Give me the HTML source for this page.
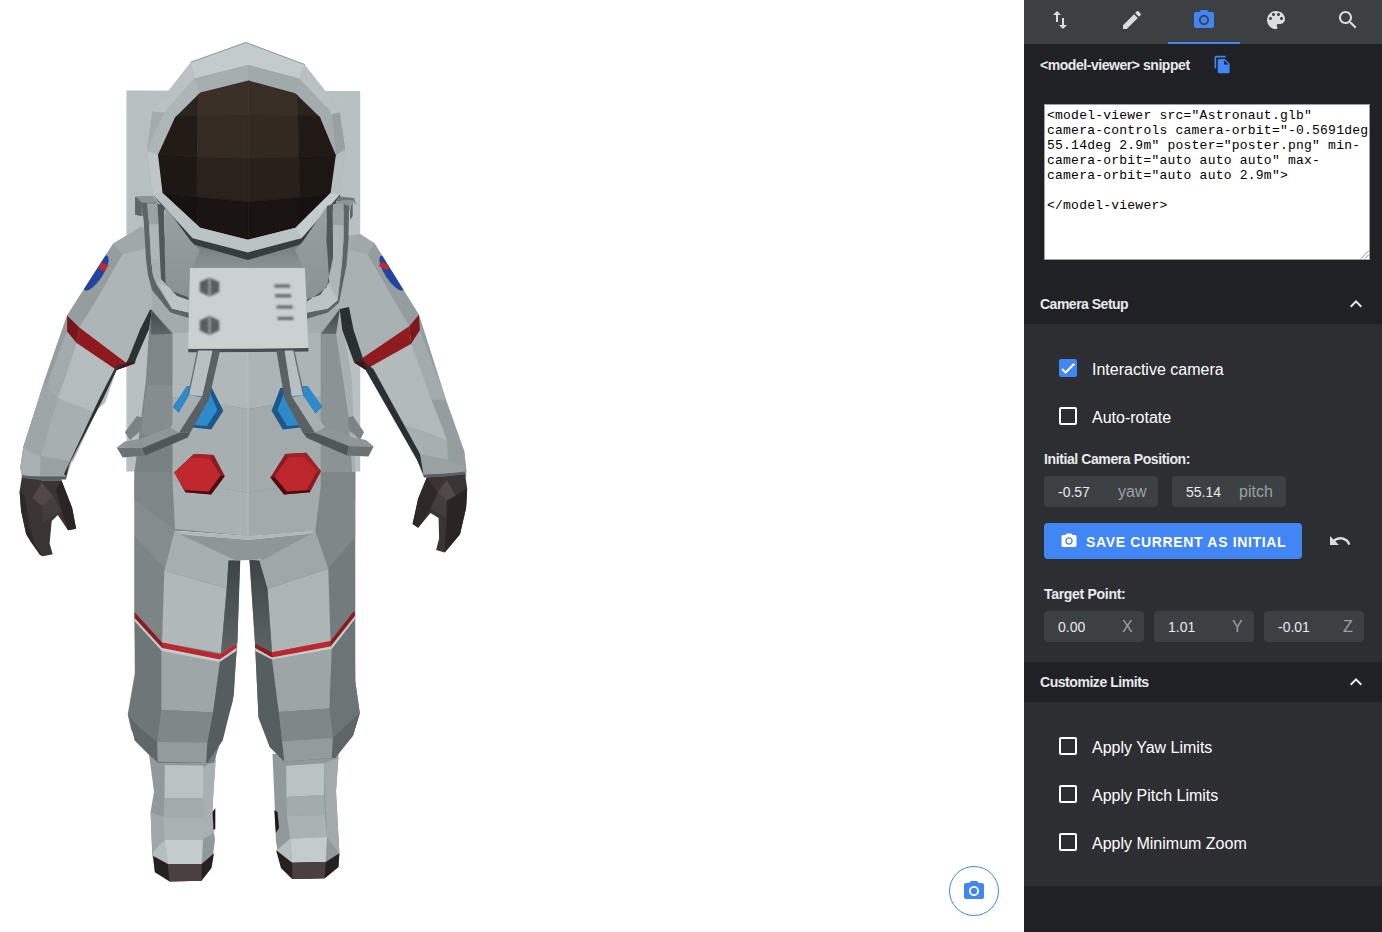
<!DOCTYPE html>
<html><head><meta charset="utf-8">
<style>
*{margin:0;padding:0;box-sizing:border-box}
html,body{width:1382px;height:932px;overflow:hidden;background:#fff;font-family:"Liberation Sans",sans-serif}
#viewer{position:absolute;left:0;top:0;width:1024px;height:932px;background:#fff}
#astro{position:absolute;left:0;top:0}
#snap{position:absolute;left:949px;top:866px;width:50px;height:50px;border:1.5px solid #4285f4;border-radius:50%}
#snap svg{position:absolute;left:12px;top:12px}
#panel{position:absolute;left:1024px;top:0;width:358px;height:932px;background:#202124;color:#e8eaed}
#tabs{position:absolute;left:0;top:0;width:358px;height:44px;background:#3c4043}
#tabs svg{position:absolute;top:8px}
#uline{position:absolute;left:144px;top:42px;width:72px;height:2px;background:#4285f4}
.abs{position:absolute}
.hdr{font-size:14px;font-weight:bold;color:#e8eaed;white-space:nowrap}
#ta{position:absolute;left:20px;top:104px;width:326px;height:156px;background:#fff;border:1px solid #a0a0a0;font-family:"Liberation Mono",monospace;font-size:13px;line-height:15px;letter-spacing:0.23px;color:#000;padding:3px 2px;white-space:pre;overflow:hidden}
.sec{position:absolute;left:0;width:358px;background:#2d2e31}
.cb{position:absolute;left:35px;width:18px;height:18px;border:2px solid #fff;border-radius:2px}
.cb.on{background:#4285f4;border-color:#4285f4}
.lbl{position:absolute;left:68px;font-size:16px;color:#fff;white-space:nowrap}
.inp{position:absolute;height:31px;background:#3c4043;border-radius:4px}
.inp span{position:absolute;font-size:14px;white-space:nowrap}
.v{color:#e8eaed}
.u{color:#9aa0a6;font-size:16px!important}
#btn{position:absolute;left:20px;top:523px;width:258px;height:36px;background:#4285f4;border-radius:4px}
</style></head><body>
<div id="viewer">
<svg id="astro" width="1024" height="932" viewBox="0 0 1024 932"><defs><linearGradient id="bp" x1="0" y1="0" x2="1" y2="0"><stop offset="0" stop-color="#b7bfc1"/><stop offset="0.5" stop-color="#bbc3c5"/><stop offset="1" stop-color="#b8c0c2"/></linearGradient><linearGradient id="thl" x1="0" y1="0" x2="0" y2="1"><stop offset="0" stop-color="#3d4447"/><stop offset="1" stop-color="#5c6466"/></linearGradient><linearGradient id="arpt" x1="0" y1="0" x2="0" y2="1"><stop offset="0" stop-color="#41484b"/><stop offset="1" stop-color="#5e6669"/></linearGradient><linearGradient id="lpl" x1="0" y1="0" x2="0" y2="1"><stop offset="0" stop-color="#98a0a2"/><stop offset="1" stop-color="#8a9294"/></linearGradient><linearGradient id="chs" x1="0" y1="0" x2="0" y2="1"><stop offset="0" stop-color="#70787a"/><stop offset="1" stop-color="#8a9294"/></linearGradient><clipPath id="visor"><polygon points="248.5,80.6 295.3,93.3 320,117.3 335.8,155.3 330.6,193.1 295.6,227.7 247.8,239.7 200.1,227.7 162.6,193.1 158,154.8 175,117.6 200.3,92.4"/></clipPath><filter id="bl" x="-30%" y="-30%" width="160%" height="160%"><feGaussianBlur stdDeviation="0.9"/></filter></defs><polygon fill="url(#bp)" points="126.0,90.5 360.2,91.0 360.2,471.5 126.0,471.5"/><polygon fill="#cfd7d9" points="126.0,90.5 127.2,90.5 127.2,471.5 126.0,471.5"/><polygon fill="#91999b" points="148.9,753.7 215.8,753.7 213.2,796.6 212.4,812.0 214.0,832.7 215.0,839.6 211.5,867.0 154.9,872.2 152.3,855.0 150.6,812.0 154.0,791.5"/><polygon fill="#9fa7a9" points="150.6,812.0 164.3,817.6 164.3,839.6 152.3,855.0"/><polygon fill="#a8b0b2" points="203.0,767.5 215.8,760.0 213.2,796.6 212.4,812.0 214.0,832.7 203.0,839.6"/><polygon fill="#bac2c4" points="164.8,765.0 203.1,765.5 203.1,798.0 164.5,798.0"/><polygon fill="#a3abad" points="164.5,798.0 203.1,798.0 204.6,817.6 163.5,817.6"/><polygon fill="#aab2b4" points="163.5,817.6 204.6,817.6 203.0,840.0 164.3,840.0"/><polygon fill="#c3cbcd" points="164.3,840.0 203.0,840.0 201.6,864.0 167.8,864.0"/><polygon fill="#b6bec0" points="153.2,852.0 164.3,840.0 167.8,864.0 153.2,856.0"/><polygon fill="#1c1819" points="212.5,812.0 215.3,808.0 215.3,829.0 213.5,830.0"/><polygon fill="#272021" points="153.2,855.9 167.8,864.0 201.6,864.0 214.0,853.3 211.5,867.9 201.6,880.7 169.5,881.6 154.9,872.2"/><polygon fill="#4a4041" points="167.8,864.0 201.6,864.0 201.6,880.7 169.5,881.6"/><polygon fill="#91999b" points="272.5,753.7 338.5,753.7 336.0,791.5 339.4,853.3 338.5,867.0 324.8,878.2 292.2,879.0 281.0,867.9 275.9,841.3 275.0,812.0"/><polygon fill="#a2aaac" points="324.0,763.2 338.5,758.0 336.0,791.5 339.4,853.3 327.0,837.0"/><polygon fill="#1c1819" points="274.3,810.0 277.5,812.0 279.0,828.0 275.8,833.0"/><polygon fill="#bac2c4" points="286.2,765.7 324.0,763.2 324.0,795.0 286.5,797.0"/><polygon fill="#a3abad" points="286.5,797.0 324.0,795.0 325.0,815.0 287.0,816.0"/><polygon fill="#aab2b4" points="287.0,816.0 325.0,815.0 327.0,837.0 290.0,838.7"/><polygon fill="#c3cbcd" points="290.0,838.7 327.0,837.0 325.7,861.9 292.2,862.7"/><polygon fill="#b6bec0" points="277.0,850.0 290.0,838.7 292.2,862.7 278.0,855.0"/><polygon fill="#272021" points="276.0,850.0 292.2,862.7 325.7,861.9 339.4,853.3 338.5,867.0 324.8,878.2 292.2,879.0 281.0,867.9"/><polygon fill="#4a4041" points="292.2,862.7 325.7,861.9 324.8,878.2 292.2,879.0"/><polygon fill="#747c7e" points="134.5,480.0 176.1,530.7 235.8,560.5 239.8,560.0 237.4,642.6 232.7,701.6 213.8,763.0 157.2,763.0 149.0,753.5 131.2,730.0 127.7,714.6 134.8,673.3 134.5,612.0"/><polygon fill="#7a8284" points="134.5,472.0 172.5,472.0 175.0,493.0 134.5,492.9"/><polygon fill="#848c8e" points="134.5,492.9 175.0,493.0 175.0,529.0 164.8,568.8 134.5,536.6"/><polygon fill="#7c8486" points="134.5,536.6 164.8,568.8 162.0,642.6 134.5,612.0"/><polygon fill="#a7afb1" points="175.0,529.0 235.8,560.5 228.5,560.5 226.7,588.5 164.3,570.4 164.8,568.8"/><polygon fill="#b0b8ba" points="164.3,570.4 226.7,588.5 221.0,653.2 162.0,642.6"/><polygon fill="url(#thl)" points="228.5,560.5 240.3,560.5 237.4,642.6 221.0,653.2 226.7,588.5"/><polygon fill="#6e7678" points="134.5,618.0 161.3,651.2 161.3,709.8 157.1,741.9 157.8,761.4 150.1,755.8 134.8,740.5 128.5,715.3 135.5,680.5"/><polygon fill="#5f6769" points="128.5,715.3 134.8,740.5 150.1,755.8 157.8,761.4 157.1,741.9 140.0,728.0"/><polygon fill="#555d5f" points="219.9,660.9 236.6,648.4 233.8,695.8 222.7,740.5 207.3,762.8 206.0,762.8 207.3,742.6 212.9,712.6"/><polygon fill="#9ea6a8" points="161.3,651.2 219.9,660.9 212.9,712.6 161.3,709.8"/><polygon fill="#7f8789" points="161.3,709.8 212.9,712.6 207.3,742.6 157.1,741.9"/><polygon fill="#939b9d" points="157.1,741.9 207.3,742.6 206.0,762.8 157.8,761.4"/><polygon fill="#8f1b20" points="134.5,612.0 162.0,642.6 162.0,648.0 134.5,618.0"/><polygon fill="#c0252b" points="162.0,642.6 219.7,654.4 236.0,643.8 236.3,648.0 219.7,659.5 162.0,648.0"/><polygon fill="#c4ccce" points="134.5,618.0 162.0,648.0 219.7,659.5 236.3,648.0 236.3,651.0 219.7,662.0 162.0,651.2 134.5,621.0"/><polygon fill="#737b7d" points="259.3,560.5 315.4,530.7 355.2,472.0 355.3,610.7 355.3,681.6 359.8,713.0 353.0,735.6 335.0,758.1 284.4,761.5 269.8,746.9 258.5,717.6 255.1,645.5 249.5,560.0"/><polygon fill="#788082" points="355.2,472.0 320.8,472.0 316.0,493.0 355.2,492.9"/><polygon fill="#7f8789" points="355.2,492.9 316.0,493.0 315.4,529.0 328.0,568.8 355.2,536.6"/><polygon fill="#9fa7a9" points="262.9,559.6 315.4,530.7 328.3,568.8 267.5,589.0 259.3,560.5"/><polygon fill="#adb5b7" points="267.5,589.0 328.3,568.8 330.5,641.0 272.0,652.3"/><polygon fill="url(#thl)" points="249.5,560.0 259.3,560.5 267.5,589.0 272.0,652.3 255.1,644.4"/><polygon fill="#565e60" points="255.1,645.5 272.0,659.0 278.8,712.0 282.1,741.2 284.4,761.5 269.8,746.9 258.5,717.6"/><polygon fill="#6c7476" points="331.7,649.0 354.2,616.0 355.3,681.6 359.8,713.0 353.0,735.6 335.0,758.1 331.7,758.1 332.8,737.8 329.4,708.6"/><polygon fill="#5d6567" points="359.8,713.0 353.0,735.6 335.0,758.1 331.7,758.1 332.8,737.8"/><polygon fill="#9da5a7" points="272.0,659.0 331.7,649.0 329.4,708.6 278.8,712.0"/><polygon fill="#7f8789" points="278.8,712.0 329.4,708.6 332.8,737.8 282.1,741.2"/><polygon fill="#939b9d" points="282.1,741.2 332.8,737.8 331.7,758.1 284.4,761.5"/><polygon fill="#8f1b20" points="255.1,643.8 272.0,652.3 272.0,657.5 255.1,648.0"/><polygon fill="#c0252b" points="272.0,652.3 330.5,641.0 330.7,646.5 272.0,657.5"/><polygon fill="#8e1a1f" points="330.5,641.0 354.2,610.7 355.0,616.0 330.7,646.5"/><polygon fill="#c4ccce" points="255.1,648.0 272.0,657.5 330.7,646.5 355.0,616.0 355.0,619.0 331.7,649.0 272.0,659.5 255.1,651.0"/><polygon fill="#7e8688" points="150.9,300.0 339.7,300.0 343.6,380.0 355.2,472.0 355.2,499.7 315.4,530.7 248.4,536.1 176.1,530.7 134.5,499.7 134.5,472.0 145.9,380.0"/><polygon fill="#7e8688" points="150.9,334.7 172.1,333.8 172.5,385.0 147.0,385.0"/><polygon fill="#858d8f" points="147.0,385.0 172.5,385.0 172.5,435.0 140.5,435.0"/><polygon fill="#798183" points="140.5,435.0 172.5,435.0 172.5,472.0 134.5,472.0 137.4,455.0"/><polygon fill="#8b9395" points="321.6,333.8 336.0,333.8 348.6,415.8 352.0,472.0 320.8,472.0"/><polygon fill="#a8b0b2" points="336.0,333.8 339.7,309.0 352.0,380.0 355.2,472.0 352.0,472.0 348.6,415.8"/><polygon fill="#b0b8ba" points="172.5,330.0 248.4,330.0 248.4,409.0 172.5,397.0"/><polygon fill="#acb4b6" points="248.4,330.0 320.8,330.0 320.8,397.0 248.4,409.0"/><polygon fill="#a7afb1" points="172.5,397.0 248.4,409.0 248.4,492.8 172.5,480.6"/><polygon fill="#a2aaac" points="248.4,409.0 320.8,397.0 320.8,480.6 248.4,492.8"/><polygon fill="#a9b1b3" points="172.5,480.6 248.4,492.8 248.4,536.1 175.0,529.0"/><polygon fill="#a2aaac" points="248.4,492.8 320.8,480.6 320.8,486.0 315.4,530.7 248.4,536.1"/><polygon fill="#bbc3c5" points="247.6,330.0 248.6,330.0 248.6,536.0 247.6,536.0"/><polygon fill="#b0b8ba" points="176.1,530.7 248.4,536.1 315.4,530.7 311.8,533.4 248.4,539.7 179.7,534.3"/><polygon fill="#8e9698" points="179.7,534.3 248.4,539.7 311.8,533.4 262.9,559.6 235.8,560.5"/><polygon fill="#a3abad" points="141.6,226.7 190.8,241.0 247.8,259.2 302.4,242.2 360.6,234.0 374.5,243.5 339.8,309.8 320.8,332.8 172.5,332.8 150.9,309.0 113.7,243.5"/><polygon fill="url(#chs)" points="160.0,236.0 191.0,241.2 247.8,259.2 303.0,241.2 330.0,236.0 322.0,268.0 172.0,268.0"/><polygon fill="url(#arpt)" points="150.9,309.7 172.1,333.8 150.9,334.7"/><polygon fill="url(#arpt)" points="339.9,308.7 321.6,333.8 336.0,333.8"/><polygon fill="#a2aaac" points="113.3,243.4 141.6,226.7 147.1,247.7 152.7,304.8 151.9,309.7 149.0,329.0 136.4,358.0 134.5,363.7 116.6,370.1 102.5,400.0 69.0,464.6 66.5,478.0 22.2,478.0 20.2,467.7 23.3,447.3 44.7,380.0 67.1,315.4"/><polygon fill="#a2aaac" points="374.4,243.2 359.0,234.5 347.4,249.0 336.0,304.8 339.7,308.9 342.3,330.0 354.2,362.4 365.7,370.1 417.1,460.1 423.5,477.0 466.4,477.0 466.4,470.7 464.3,451.4 445.9,399.7 418.9,314.7"/><polygon fill="#959d9f" points="113.3,243.4 122.3,254.5 96.5,299.9 79.3,327.6 76.7,343.1 64.3,380.0 57.9,398.2 40.7,456.1 40.2,476.5 22.2,475.8 20.2,467.7 23.3,447.3 44.7,380.0 67.1,315.4"/><polygon fill="#a3abad" points="67.1,331.5 76.7,343.1 64.3,380.0 57.9,398.2 46.0,387.5 63.5,340.0"/><polygon fill="#9ea6a8" points="46.0,387.5 57.9,398.2 40.7,456.1 30.0,451.8 23.3,447.3 44.7,380.0"/><polygon fill="#a8b0b2" points="30.0,451.8 40.7,456.1 40.2,476.5 22.2,475.8 20.2,467.7 23.3,447.3"/><polygon fill="#a0a8aa" points="113.3,243.4 141.6,226.7 147.1,247.7 122.3,254.5"/><polygon fill="#adb5b7" points="122.3,254.5 147.1,247.7 152.7,304.8 151.9,309.7 149.0,329.0 136.4,358.0 134.5,363.7 125.7,362.4 79.3,327.6 96.5,299.9"/><polygon fill="#b5bdbf" points="76.7,343.1 116.6,370.1 105.0,403.1 94.3,412.0 57.9,398.2 64.3,380.0"/><polygon fill="#a7afb1" points="57.9,398.2 94.3,412.0 97.0,410.0 72.9,461.5 71.8,461.5 40.7,456.1"/><polygon fill="#99a1a3" points="40.7,456.1 71.8,461.5 66.5,476.5 40.2,476.5"/><polygon fill="#525a5d" points="22.2,475.8 40.2,476.5 66.5,476.5 66.0,479.5 40.2,479.5 22.2,478.5"/><polygon fill="#7a161a" points="67.1,315.4 79.3,327.6 76.7,343.1 67.1,331.5"/><polygon fill="#8e1a1f" points="79.3,327.6 125.7,362.4 116.6,370.1 76.7,343.1"/><polygon fill="#2b3134" points="151.9,309.7 149.0,329.0 136.4,358.0 134.5,363.7 116.6,370.1 102.5,400.0 69.0,464.6 66.5,476.5 64.0,474.0 98.6,400.0 116.6,365.0 125.8,363.7 128.7,358.0 140.3,329.0 150.0,309.7"/><polygon fill="#4a1215" points="125.7,362.4 136.0,362.4 116.6,370.1"/><polygon fill="#3b3435" points="22.1,475.2 41.5,480.3 61.4,480.3 72.1,507.8 76.1,528.7 68.0,530.2 57.8,514.9 51.7,521.0 49.6,543.5 52.7,554.2 43.0,556.2 40.0,554.7 31.3,542.4 26.2,534.3 21.1,510.9 19.6,491.5"/><polygon fill="#504849" points="32.3,498.6 41.5,482.3 53.7,496.6 42.5,505.8"/><polygon fill="#443d3e" points="42.5,505.8 53.7,496.6 61.9,511.9 42.5,522.1"/><polygon fill="#2a2425" points="61.4,480.3 72.1,507.8 76.1,528.7 68.0,530.2 61.9,511.9 56.0,490.0"/><polygon fill="#2e2829" points="19.6,491.5 25.0,496.0 28.0,520.0 35.0,545.0 43.0,556.2 40.0,554.7 31.3,542.4 26.2,534.3 21.1,510.9"/><polygon fill="#5a6164" points="22.1,475.2 41.5,477.5 61.4,477.9 61.4,480.3 41.5,480.3 22.1,478.0"/><polygon fill="#959d9f" points="374.4,243.2 367.7,254.8 409.2,326.3 411.2,343.7 431.4,399.7 447.0,440.0 448.0,473.8 466.4,470.7 464.3,451.4 445.9,399.7 418.9,314.7"/><polygon fill="#a3abad" points="411.2,343.7 419.9,330.1 445.9,399.7 431.4,399.7"/><polygon fill="#a0a8aa" points="374.4,243.2 359.0,234.5 347.4,249.0 367.7,254.8"/><polygon fill="#a9b1b3" points="367.7,254.8 347.4,249.0 336.0,304.8 339.7,308.9 354.2,362.4 363.8,361.1 409.2,326.3"/><polygon fill="#b2babc" points="363.8,361.1 409.2,326.3 411.2,343.7 431.4,399.7 447.0,440.0 405.0,425.0 380.0,385.0"/><polygon fill="#a7afb1" points="380.0,385.0 405.0,425.0 447.0,440.0 448.0,460.0 420.0,454.0"/><polygon fill="#99a1a3" points="420.0,454.0 448.0,460.0 466.4,470.7 465.3,472.8 423.5,474.8"/><polygon fill="#525a5d" points="423.5,474.8 465.3,472.8 465.3,475.5 424.0,477.5"/><polygon fill="#7e161b" points="409.2,326.3 418.9,314.7 419.9,330.1 411.2,343.7"/><polygon fill="#8f1a1f" points="409.2,326.3 411.2,343.7 366.7,368.8 355.1,363.0"/><polygon fill="#2a3032" points="339.7,308.9 349.0,307.0 353.6,330.0 363.8,361.1 373.5,369.3 420.0,454.0 423.5,474.8 417.1,460.1 365.7,370.1 354.2,362.4 342.3,330.0"/><polygon fill="#4a1215" points="354.2,362.4 363.8,361.1 366.7,368.8 365.7,370.1"/><polygon fill="#3b3435" points="426.9,477.2 445.8,476.2 465.1,474.2 467.2,488.4 466.1,507.8 460.0,534.3 449.8,546.5 444.7,552.6 436.1,550.1 439.1,538.4 438.6,518.0 430.5,512.9 418.2,527.7 412.6,524.1 418.2,498.6"/><polygon fill="#504849" points="437.6,492.5 446.8,480.3 455.9,495.6 446.8,500.7"/><polygon fill="#443d3e" points="430.5,508.8 437.6,492.5 446.8,500.7 446.8,518.0"/><polygon fill="#2a2425" points="455.9,495.6 467.2,488.4 466.1,507.8 460.0,534.3 449.8,546.5 444.7,552.6 446.8,518.0 446.8,500.7"/><polygon fill="#2e2829" points="426.9,477.2 437.6,492.5 430.5,508.8 418.2,527.7 412.6,524.1 418.2,498.6"/><polygon fill="#5a6164" points="426.9,477.2 445.8,476.2 465.1,474.2 465.1,471.5 445.8,473.8 426.9,474.8"/><clipPath id="la"><polygon points="113.3,243.4 77,299.9 130,310 140,240"/></clipPath><g clip-path="url(#la)"><ellipse cx="96" cy="273" rx="7" ry="20.5" transform="rotate(33 96 273)" fill="#2244a0"/><polygon points="102.1,262.2 108.5,265.7 104.2,271.6 97.9,267.8" fill="#c0282e"/></g><clipPath id="ra"><polygon points="374.4,243.2 418.9,314.7 350,310 350,240"/></clipPath><g clip-path="url(#ra)"><ellipse cx="392" cy="273" rx="7" ry="20.5" transform="rotate(-33 392 273)" fill="#2244a0"/><polygon points="381.2,261.5 389.9,266 386.5,270.2 379,266" fill="#c0282e"/></g><polygon fill="#a2aaac" points="245.8,43.0 304.8,65.0 326.0,92.0 340.2,112.6 345.2,149.5 340.0,194.6 303.0,241.2 247.8,259.2 191.0,241.2 152.8,194.6 146.8,151.0 152.5,111.2 168.6,90.8 190.6,62.7"/><polygon fill="#8d9496" points="190.6,61.7 245.8,42.0 304.8,64.0 304.8,65.5 245.8,44.0 190.6,63.2"/><polygon fill="#bac2c4" points="190.6,62.7 194.4,78.4 164.3,112.8 154.0,135.0 146.8,151.0 152.5,111.2 168.6,90.8"/><polygon fill="#a4acae" points="152.5,111.2 164.3,112.8 154.0,135.0 146.8,151.0"/><polygon fill="#b9c1c3" points="304.8,65.0 298.9,78.4 329.5,110.3 345.2,149.5 340.2,112.6 326.0,92.0"/><polygon fill="#c3cbcd" points="245.8,43.0 304.8,65.0 298.9,78.4 248.0,65.0 194.4,78.4 190.6,62.7"/><polygon fill="#a6aeb0" points="194.4,78.4 248.0,65.0 248.5,80.6 200.3,92.4"/><polygon fill="#a1a9ab" points="248.0,65.0 298.9,78.4 295.3,93.3 248.5,80.6"/><polygon fill="#aeb6b8" points="194.4,78.4 200.3,92.4 175.0,117.6 158.0,154.8 146.8,151.0 154.0,135.0 164.3,112.8"/><polygon fill="#bec6c8" points="158.0,154.8 162.6,193.1 152.8,194.6 146.8,151.0"/><polygon fill="#a4acae" points="298.9,78.4 295.3,93.3 320.0,117.3 335.8,155.3 345.2,149.5 329.5,110.3"/><polygon fill="#b6bec0" points="335.8,155.3 330.6,193.1 340.0,194.6 345.2,149.5"/><polygon fill="#98a0a2" points="332.0,114.0 339.7,112.5 345.2,148.3 335.8,155.3"/><g clip-path="url(#visor)"><polygon fill="#2b231d" points="140.0,60.0 198.6,60.0 197.8,115.5 140.0,118.0" stroke="#2b231d" stroke-width="0.6"/><polygon fill="#3b3027" points="198.6,60.0 248.4,60.0 248.4,114.8 197.8,115.5" stroke="#3b3027" stroke-width="0.6"/><polygon fill="#382e26" points="248.4,60.0 296.4,60.0 298.0,115.5 248.4,114.8" stroke="#382e26" stroke-width="0.6"/><polygon fill="#2a221c" points="296.4,60.0 350.0,60.0 350.0,118.0 298.0,115.5" stroke="#2a221c" stroke-width="0.6"/><polygon fill="#221b16" points="140.0,118.0 197.8,115.5 197.2,157.0 140.0,153.0" stroke="#221b16" stroke-width="0.6"/><polygon fill="#352b23" points="197.8,115.5 248.4,114.8 248.4,158.5 197.2,157.0" stroke="#352b23" stroke-width="0.6"/><polygon fill="#332921" points="248.4,114.8 298.0,115.5 299.0,157.0 248.4,158.5" stroke="#332921" stroke-width="0.6"/><polygon fill="#201915" points="298.0,115.5 350.0,118.0 350.0,154.0 299.0,157.0" stroke="#201915" stroke-width="0.6"/><polygon fill="#1e1814" points="140.0,153.0 197.2,157.0 196.9,197.0 140.0,191.0" stroke="#1e1814" stroke-width="0.6"/><polygon fill="#2a221c" points="197.2,157.0 248.4,158.5 248.4,201.7 196.9,197.0" stroke="#2a221c" stroke-width="0.6"/><polygon fill="#28201b" points="248.4,158.5 299.0,157.0 299.9,197.5 248.4,201.7" stroke="#28201b" stroke-width="0.6"/><polygon fill="#1c1713" points="299.0,157.0 350.0,154.0 350.0,192.0 299.9,197.5" stroke="#1c1713" stroke-width="0.6"/><polygon fill="#151210" points="140.0,191.0 196.9,197.0 198.0,250.0 140.0,250.0" stroke="#151210" stroke-width="0.6"/><polygon fill="#1a1512" points="196.9,197.0 248.4,201.7 248.4,250.0 198.0,250.0" stroke="#1a1512" stroke-width="0.6"/><polygon fill="#191411" points="248.4,201.7 299.9,197.5 300.0,250.0 248.4,250.0" stroke="#191411" stroke-width="0.6"/><polygon fill="#141110" points="299.9,197.5 350.0,192.0 350.0,250.0 300.0,250.0" stroke="#141110" stroke-width="0.6"/></g><polygon fill="#bac2c4" points="152.8,194.6 162.6,193.1 200.1,227.7 247.8,239.7 295.6,227.7 330.6,193.1 340.0,194.6 301.6,238.2 247.8,252.5 192.6,238.2"/><polygon fill="#c4ccce" points="295.6,227.7 330.6,193.1 340.0,194.6 301.6,238.2"/><polygon fill="#363c3f" points="152.8,194.6 192.6,238.2 247.8,252.5 301.6,238.2 340.0,194.6 341.0,201.0 303.0,243.7 247.8,260.0 191.0,243.7"/><polygon fill="url(#lpl)" points="164.9,206.0 191.0,241.2 200.0,250.0 192.0,268.0 188.6,298.0 172.0,291.0 165.6,283.0 164.9,240.0"/><polygon fill="url(#lpl)" points="327.0,206.0 303.0,241.2 295.0,250.0 303.0,268.0 307.0,299.3 320.2,295.1 329.3,281.9 326.5,240.0"/><polygon fill="#7b8385" points="135.2,196.7 152.3,195.9 162.6,209.6 158.0,216.0 141.0,216.0 135.2,214.8"/><polygon fill="#8d9597" points="137.0,196.6 152.3,195.9 158.0,202.0 142.0,202.5"/><polygon fill="#5d6568" points="135.2,196.7 141.2,202.7 141.5,216.0 135.2,214.8"/><polygon fill="#5d6568" points="141.2,202.7 147.0,203.0 149.0,221.0 151.0,259.0 153.0,275.0 156.5,284.0 171.9,308.4 188.6,312.6 188.6,318.1 170.5,312.6 152.0,290.0 148.0,275.0 146.0,259.0 143.7,220.8"/><polygon fill="#aeb6b8" points="149.0,224.0 158.5,224.0 160.0,259.0 161.0,279.0 167.7,286.0 176.7,295.8 188.6,300.0 188.6,312.6 171.9,308.4 156.5,284.0 153.0,275.0 151.0,259.0"/><polygon fill="#9aa2a4" points="147.0,203.6 157.5,203.6 158.5,224.2 149.0,224.2"/><polygon fill="#a8b0b2" points="151.0,259.0 160.0,259.0 161.0,279.0 156.5,284.0 153.0,275.0"/><polygon fill="#bcc4c6" points="159.0,284.0 167.7,286.0 176.7,295.8 188.6,300.0 188.6,312.6 171.9,308.4"/><polygon fill="#50585a" points="157.5,203.6 164.0,206.0 164.5,240.0 165.6,283.0 172.0,291.0 188.6,297.5 188.6,300.0 176.7,295.8 167.7,286.0 161.0,279.0 160.0,259.0 158.5,224.0"/><polygon fill="#5d6568" points="352.7,200.6 350.0,210.3 350.0,220.0 352.7,216.0"/><polygon fill="#8d9597" points="352.7,200.6 336.0,200.6 334.5,210.3 350.0,210.3"/><polygon fill="#6f7779" points="339.0,196.5 354.0,198.0 356.0,205.0 352.7,200.6 336.0,200.6"/><polygon fill="#5d6568" points="349.0,206.0 343.5,204.0 343.5,240.0 342.0,262.3 337.7,300.0 327.9,308.4 307.0,312.6 307.0,318.8 327.9,312.6 339.0,302.8 346.5,265.0 348.5,240.0"/><polygon fill="#aeb6b8" points="343.5,225.0 333.0,225.0 333.0,258.0 326.5,287.4 307.0,301.4 307.0,312.6 327.9,308.4 337.7,300.0 342.0,262.3 343.5,240.0"/><polygon fill="#9aa2a4" points="343.5,204.0 332.5,204.0 333.0,225.0 343.5,225.0"/><polygon fill="#bcc4c6" points="329.0,284.0 326.5,287.4 307.0,301.4 307.0,312.6 327.9,308.4 337.7,300.0"/><polygon fill="#50585a" points="332.5,204.0 327.0,206.0 326.5,240.0 329.3,281.9 320.2,295.1 307.0,299.3 307.0,301.4 326.5,287.4 333.0,258.0 333.0,240.0"/><polygon fill="#474d50" points="188.2,348.8 308.4,348.1 308.4,351.6 188.2,352.3"/><polygon fill="#cbd1d1" points="190.0,267.9 304.9,267.9 308.4,348.1 188.2,348.8"/><g filter="url(#bl)"><polygon fill="#585d5f" points="209.6,277.7 219.2,282.1 219.2,292.1 209.6,296.5 199.8,292.1 199.8,282.1"/><rect x="208.6" y="278.7" width="1.8" height="16.8" fill="#a3a8aa"/></g><g filter="url(#bl)"><polygon fill="#585d5f" points="209.6,316.1 219.2,320.5 219.2,330.5 209.6,334.9 199.8,330.5 199.8,320.5"/><rect x="208.6" y="317.1" width="1.8" height="16.8" fill="#a3a8aa"/></g><g filter="url(#bl)"><rect x="274.5" y="284.5" width="15.5" height="3" fill="#5f6466"/><rect x="275.2" y="294.3" width="16.1" height="3" fill="#5f6466"/><rect x="276.6" y="305.5" width="16.1" height="3" fill="#5f6466"/><rect x="277.6" y="316.9" width="15.8" height="3" fill="#5f6466"/></g><polygon fill="#1b5889" points="173.0,406.7 187.1,385.9 211.9,387.9 223.3,410.7 211.2,429.5 193.1,427.5"/><polygon fill="#2e8ac8" points="173.0,406.7 187.1,385.9 208.0,387.7 217.3,410.0 207.0,426.0 193.1,425.0"/><polygon fill="#1b5889" points="322.2,406.7 307.4,385.9 280.3,387.9 271.6,410.7 282.8,429.5 300.0,427.5"/><polygon fill="#2e8ac8" points="322.2,406.7 307.4,385.9 286.0,387.7 277.5,410.0 287.0,426.0 300.0,425.0"/><polygon fill="#6a7073" points="197.0,350.4 198.8,350.4 189.8,395.3 187.8,395.3"/><polygon fill="#b8c0c2" points="198.5,350.4 212.6,350.4 202.5,396.0 189.1,395.3"/><polygon fill="#5a6063" points="212.6,350.4 220.0,350.4 209.2,398.6 202.5,396.0"/><polygon fill="#a7afb1" points="189.1,395.3 202.5,397.3 179.0,432.8 170.3,427.5"/><polygon fill="#5a6063" points="202.5,396.0 209.2,398.6 190.5,432.2 179.0,432.8"/><polygon fill="#8e9698" points="170.3,427.5 179.0,432.8 142.2,448.3 138.8,438.9"/><polygon fill="#50575a" points="179.0,432.8 190.5,432.2 187.8,437.5 144.9,455.6 142.2,448.3"/><polygon fill="#7d8385" points="124.8,432.2 136.8,416.1 142.2,417.4 141.5,430.0 130.0,440.0"/><polygon fill="#8e9698" points="138.8,438.9 142.2,448.3 116.7,447.6 124.8,441.6"/><polygon fill="#6b7174" points="116.7,447.6 142.2,448.3 144.9,455.6 122.7,457.6"/><polygon fill="#6a7073" points="294.5,350.4 292.7,350.4 302.4,395.3 304.4,395.3"/><polygon fill="#b8c0c2" points="293.0,350.4 284.5,350.4 291.5,396.0 303.0,395.3"/><polygon fill="#5a6063" points="284.5,350.4 276.3,350.4 284.5,398.6 291.5,396.0"/><polygon fill="#a7afb1" points="303.0,395.3 291.5,397.3 315.0,432.8 325.0,427.5"/><polygon fill="#5a6063" points="291.5,396.0 284.5,398.6 303.0,433.0 315.0,432.8"/><polygon fill="#8e9698" points="325.0,427.5 315.0,432.8 349.0,446.3 352.0,437.0"/><polygon fill="#50575a" points="315.0,432.8 303.0,433.0 307.0,438.0 347.0,455.6 349.0,446.3"/><polygon fill="#7d8385" points="364.0,432.2 353.0,416.1 348.0,417.4 349.0,430.0 360.0,440.0"/><polygon fill="#8e9698" points="352.0,437.0 349.0,446.3 373.6,446.3 366.0,440.0"/><polygon fill="#6b7174" points="373.6,446.3 349.0,446.3 347.0,455.6 368.5,456.5"/><polygon fill="#8a1b20" points="193.9,453.9 213.7,455.1 224.8,476.1 211.2,494.6 185.3,492.2 174.2,472.4"/><polygon fill="#4d0d10" points="224.8,476.1 211.2,494.6 185.3,492.2 185.3,490.0 208.5,491.5 220.5,475.5"/><polygon fill="#a32227" points="193.9,453.9 213.7,455.1 210.0,458.5 191.0,457.5 174.2,472.4"/><polygon fill="#c0282e" points="191.0,457.5 210.0,458.5 220.5,475.5 208.5,491.5 185.3,490.0 174.2,472.4"/><polygon fill="#8a1b20" points="285.2,453.9 306.2,452.7 321.0,471.2 309.9,492.2 284.0,494.6 270.4,477.4"/><polygon fill="#4d0d10" points="270.4,477.4 284.0,494.6 309.9,492.2 309.9,490.0 287.0,491.5 274.5,476.5"/><polygon fill="#a02126" points="285.2,453.9 306.2,452.7 321.0,471.2 317.0,471.0 304.0,456.5 288.0,457.5"/><polygon fill="#bd262c" points="288.0,457.5 304.0,456.5 317.0,471.0 306.5,490.0 287.0,491.5 274.5,476.5"/></svg>
<div id="snap"><svg width="24" height="24" viewBox="0 0 24 24"><path fill="#4285f4" d="M9 2L7.17 4H4c-1.1 0-2 .9-2 2v12c0 1.1.9 2 2 2h16c1.1 0 2-.9 2-2V6c0-1.1-.9-2-2-2h-3.17L15 2H9zm3 15c-2.76 0-5-2.24-5-5s2.24-5 5-5 5 2.24 5 5-2.24 5-5 5z"/><circle cx="12" cy="12" r="3.2" fill="#4285f4"/></svg></div>
</div>
<div id="panel">
 <div id="tabs">
  <svg style="left:24px" width="24" height="24" viewBox="0 0 24 24"><path fill="#dadce0" d="M16 17.01V10h-2v7.01h-3L15 21l4-3.99h-3zM9 3L5 6.99h3V14h2V6.99h3L9 3z"/></svg>
  <svg style="left:96px" width="24" height="24" viewBox="0 0 24 24"><path fill="#dadce0" d="M3 17.25V21h3.75L17.81 9.94l-3.75-3.75L3 17.25zM20.71 7.04c.39-.39.39-1.02 0-1.41l-2.34-2.34c-.39-.39-1.02-.39-1.41 0l-1.83 1.83 3.75 3.75 1.83-1.83z"/></svg>
  <svg style="left:168px" width="24" height="24" viewBox="0 0 24 24"><path fill="#4285f4" d="M9 2L7.17 4H4c-1.1 0-2 .9-2 2v12c0 1.1.9 2 2 2h16c1.1 0 2-.9 2-2V6c0-1.1-.9-2-2-2h-3.17L15 2H9zm3 15c-2.76 0-5-2.24-5-5s2.24-5 5-5 5 2.24 5 5-2.24 5-5 5z"/><circle cx="12" cy="12" r="3.2" fill="#4285f4"/></svg>
  <svg style="left:240px" width="24" height="24" viewBox="0 0 24 24"><path fill="#dadce0" d="M12 3c-4.97 0-9 4.03-9 9s4.03 9 9 9c.83 0 1.5-.67 1.5-1.5 0-.39-.15-.74-.39-1.01-.23-.26-.38-.61-.38-.99 0-.83.67-1.5 1.5-1.5H16c2.76 0 5-2.24 5-5 0-4.42-4.03-8-9-8zm-5.5 9c-.83 0-1.5-.67-1.5-1.5S5.67 9 6.5 9 8 9.67 8 10.5 7.33 12 6.5 12zm3-4C8.67 8 8 7.33 8 6.5S8.67 5 9.5 5s1.5.67 1.5 1.5S10.33 8 9.5 8zm5 0c-.83 0-1.5-.67-1.5-1.5S13.67 5 14.5 5s1.5.67 1.5 1.5S15.33 8 14.5 8zm3 4c-.83 0-1.5-.67-1.5-1.5S16.67 9 17.5 9s1.5.67 1.5 1.5-.67 1.5-1.5 1.5z"/></svg>
  <svg style="left:312px" width="24" height="24" viewBox="0 0 24 24"><path fill="#dadce0" d="M15.5 14h-.79l-.28-.27C15.41 12.59 16 11.11 16 9.5 16 5.91 13.09 3 9.5 3S3 5.91 3 9.5 5.91 16 9.5 16c1.61 0 3.09-.59 4.23-1.57l.27.28v.79l5 4.99L20.49 19l-4.99-5zm-6 0C7.01 14 5 11.99 5 9.5S7.01 5 9.5 5 14 7.01 14 9.5 11.99 14 9.5 14z"/></svg>
  <div id="uline"></div>
 </div>
 <div class="abs hdr" style="left:16px;top:57px;letter-spacing:-0.45px">&lt;model-viewer&gt; snippet</div>
 <svg class="abs" style="left:189px;top:55px" width="19" height="19" viewBox="0 0 24 24"><path fill="#4285f4" d="M16 1H4c-1.1 0-2 .9-2 2v14h2V3h12V1zm-1 4l6 6v10c0 1.1-.9 2-2 2H7.99C6.89 23 6 22.1 6 21l.01-14c0-1.1.89-2 1.99-2h7zm-1 7h5.5L14 6.5V12z"/></svg>
 <div id="ta">&lt;model-viewer src="Astronaut.glb"
camera-controls camera-orbit="-0.5691deg
55.14deg 2.9m" poster="poster.png" min-
camera-orbit="auto auto auto" max-
camera-orbit="auto auto 2.9m"&gt;

&lt;/model-viewer&gt;</div>
 <svg class="abs" style="left:336px;top:250px" width="10" height="9" viewBox="0 0 10 9"><path d="M1 8.5L9 0.5M5 8.5L9 4.5" stroke="#8a8a8a" stroke-width="1" fill="none"/></svg>
 <div class="abs hdr" style="left:16px;top:296px;letter-spacing:-0.5px">Camera Setup</div>
 <svg class="abs" style="left:320px;top:292px" width="24" height="24" viewBox="0 0 24 24"><path fill="#e8eaed" d="M7.41 15.41L12 10.83l4.59 4.58L18 14l-6-6-6 6z"/></svg>
 <div class="sec" style="top:324px;height:338px">
  <div class="cb on" style="top:35px"><svg width="18" height="18" viewBox="0 0 18 18" style="position:absolute;left:-2px;top:-2px"><polyline points="3.1,9.9 6.6,13.4 15.3,4.7" fill="none" stroke="#fff" stroke-width="2.1"/></svg></div>
  <div class="lbl" style="top:37px">Interactive camera</div>
  <div class="cb" style="top:83px"></div>
  <div class="lbl" style="top:85px">Auto-rotate</div>
  <div class="abs hdr" style="left:20px;top:127px;font-size:14px;letter-spacing:-0.4px">Initial Camera Position:</div>
  <div class="inp" style="left:20px;top:152px;width:114px"><span class="v" style="left:14px;top:8px">-0.57</span><span class="u" style="left:74px;top:7px">yaw</span></div>
  <div class="inp" style="left:148px;top:152px;width:114px"><span class="v" style="left:14px;top:8px">55.14</span><span class="u" style="left:67px;top:7px">pitch</span></div>
  <div class="abs hdr" style="left:20px;top:262px;letter-spacing:-0.3px">Target Point:</div>
  <div class="inp" style="left:20px;top:287px;width:100px;height:31px"><span class="v" style="left:14px;top:8px">0.00</span><span class="u" style="left:78px;top:7px">X</span></div>
  <div class="inp" style="left:130px;top:287px;width:100px;height:31px"><span class="v" style="left:14px;top:8px">1.01</span><span class="u" style="left:78px;top:7px">Y</span></div>
  <div class="inp" style="left:240px;top:287px;width:100px;height:31px"><span class="v" style="left:14px;top:8px">-0.01</span><span class="u" style="left:79px;top:7px">Z</span></div>
 </div>
 <div id="btn"><svg class="abs" style="left:16px;top:9px" width="18" height="18" viewBox="0 0 24 24"><path fill="#fff" d="M9 2L7.17 4H4c-1.1 0-2 .9-2 2v12c0 1.1.9 2 2 2h16c1.1 0 2-.9 2-2V6c0-1.1-.9-2-2-2h-3.17L15 2H9zm3 15c-2.76 0-5-2.24-5-5s2.24-5 5-5 5 2.24 5 5-2.24 5-5 5z"/><circle cx="12" cy="12" r="3.2" fill="#fff"/></svg><div class="abs" style="left:42px;top:11px;font-size:14px;font-weight:bold;letter-spacing:0.66px;color:#fff;white-space:nowrap">SAVE CURRENT AS INITIAL</div></div>
 <svg class="abs" style="left:304px;top:529px" width="24" height="24" viewBox="0 0 24 24"><path fill="#dadce0" d="M12.5 8c-2.65 0-5.05.99-6.9 2.6L2 7v9h9l-3.62-3.62c1.39-1.16 3.16-1.88 5.12-1.88 3.54 0 6.55 2.31 7.6 5.5l2.37-.78C21.08 11.030 17.150 8 12.5 8z"/></svg>
 <div class="abs hdr" style="left:16px;top:674px;letter-spacing:-0.45px">Customize Limits</div>
 <svg class="abs" style="left:320px;top:670px" width="24" height="24" viewBox="0 0 24 24"><path fill="#e8eaed" d="M7.41 15.41L12 10.83l4.59 4.58L18 14l-6-6-6 6z"/></svg>
 <div class="sec" style="top:702px;height:184px">
  <div class="cb" style="top:35px"></div>
  <div class="lbl" style="top:37px">Apply Yaw Limits</div>
  <div class="cb" style="top:83px"></div>
  <div class="lbl" style="top:85px">Apply Pitch Limits</div>
  <div class="cb" style="top:131px"></div>
  <div class="lbl" style="top:133px">Apply Minimum Zoom</div>
 </div>
</div>
</body></html>
